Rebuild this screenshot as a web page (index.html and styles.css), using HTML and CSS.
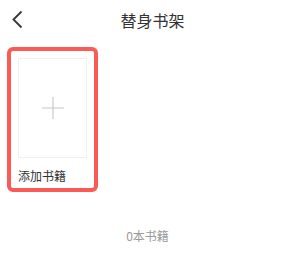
FILE: index.html
```html
<!DOCTYPE html>
<html>
<head lang="zh">
    <meta charset="UTF-8">
    <title>替身书架</title>
    <link rel="stylesheet" href="styles.css">
</head>
<body>
<div class="header">
    <span class="back">
        <svg width="12" height="19" viewBox="0 0 12 19"><path d="M10.5 1.5 L2.5 9.5 L10.5 17.5" fill="none" stroke="#3a3a3a" stroke-width="1.9"/></svg>
    </span>
    <h1 class="title">替身书架</h1>
</div>
<div class="shelf">
    <div class="book add">
        <div class="cover">
            <svg width="22" height="22" viewBox="0 0 22 22"><path d="M11 0 V22 M0 11 H22" stroke="#c8c8c8" stroke-width="1.2"/></svg>
        </div>
        <p class="name">添加书籍</p>
    </div>
</div>
<p class="count">0本书籍</p>
</body>
</html>
```

FILE: styles.css
```css
body,div,p,h1{ margin:0; padding:0;}
h1{ font-size:100%; font-weight:normal;}

body{
    width: 305px;
    height: 264px;
    background-color: #fff;
    font-family: "Noto Sans CJK SC", "Noto Sans", sans-serif;
    color: #333;
    overflow: hidden;
}
.header{
    height: 40px;
    display: flex;
    align-items: center;
    justify-content: center;
    position: relative;
}
.header .back{
    position: absolute;
    left: 11px;
    top: 10px;
    display: flex;
}
.title{
    font-size: 16px;
    color: #333;
}
.shelf{
    padding: 7px 0 0 7px;
    display: flex;
}
.book{
    width: 91px;
    height: 145px;
    box-sizing: border-box;
    border: 4px solid #fa5b56;
    border-radius: 6px;
    padding: 7px 0 0 7px;
}
.cover{
    width: 69px;
    height: 100px;
    box-sizing: border-box;
    border: 1px solid #f0f0f0;
    display: flex;
    align-items: center;
    justify-content: center;
}
.name{
    margin-top: 10px;
    font-size: 12px;
    line-height: 16px;
    color: #333;
}
.count{
    margin-top: 36px;
    padding-right: 10px;
    text-align: center;
    font-size: 12px;
    line-height: 16px;
    color: #999;
}
```
